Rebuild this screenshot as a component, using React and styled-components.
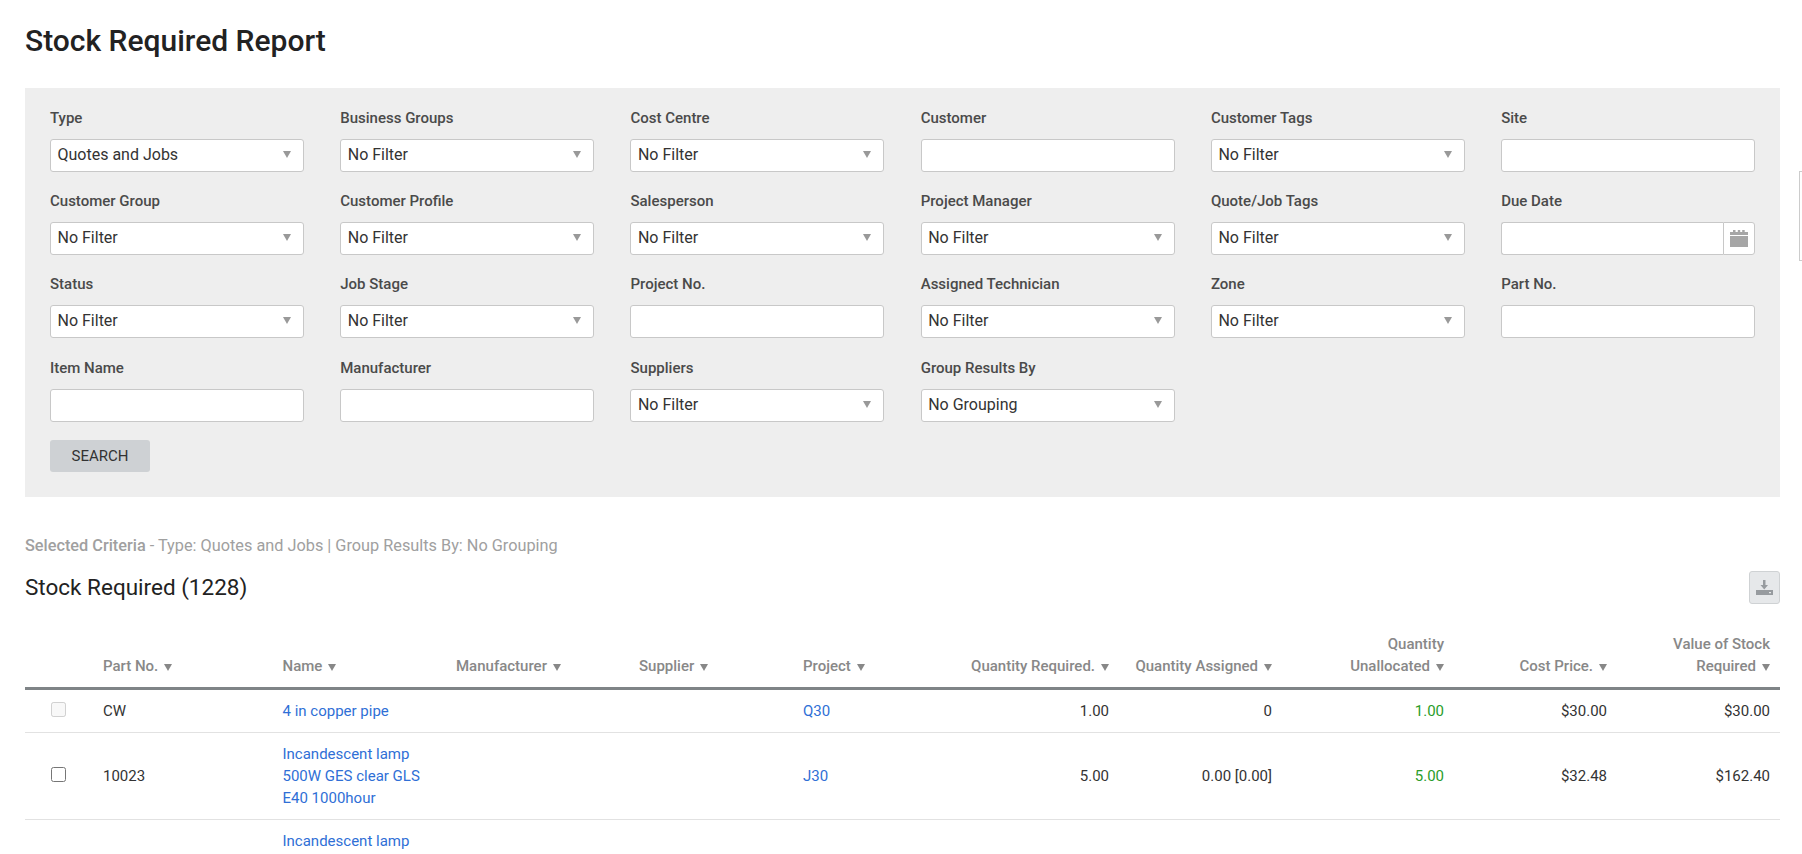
import React from 'react'
import styled, { createGlobalStyle } from 'styled-components'

const filters = [
  { label: 'Type', value: 'Quotes and Jobs' },
  { label: 'Business Groups', value: 'No Filter' },
  { label: 'Cost Centre', value: 'No Filter' },
  { label: 'Customer' },
  { label: 'Customer Tags', value: 'No Filter' },
  { label: 'Site' },
  { label: 'Customer Group', value: 'No Filter' },
  { label: 'Customer Profile', value: 'No Filter' },
  { label: 'Salesperson', value: 'No Filter' },
  { label: 'Project Manager', value: 'No Filter' },
  { label: 'Quote/Job Tags', value: 'No Filter' },
  { label: 'Due Date', date: true },
  { label: 'Status', value: 'No Filter' },
  { label: 'Job Stage', value: 'No Filter' },
  { label: 'Project No.' },
  { label: 'Assigned Technician', value: 'No Filter' },
  { label: 'Zone', value: 'No Filter' },
  { label: 'Part No.' },
  { label: 'Item Name' },
  { label: 'Manufacturer' },
  { label: 'Suppliers', value: 'No Filter' },
  { label: 'Group Results By', value: 'No Grouping' },
]

const columns = [
  { width: 68 },
  { label: 'Part No.', width: 179.5 },
  { label: 'Name', width: 173.5 },
  { label: 'Manufacturer', width: 183 },
  { label: 'Supplier', width: 164 },
  { label: 'Project', width: 162 },
  { label: 'Quantity Required.', width: 164, right: true },
  { label: 'Quantity Assigned', width: 163, right: true },
  { label: ['Quantity', 'Unallocated'], width: 172, right: true },
  { label: 'Cost Price.', width: 163, right: true },
  { label: ['Value of Stock', 'Required'], width: 163, right: true },
]

const rows = [
  { disabled: true, part: 'CW', name: ['4 in copper pipe'], project: 'Q30', required: '1.00', assigned: '0', unallocated: '1.00', cost: '$30.00', value: '$30.00' },
  { part: '10023', name: ['Incandescent lamp', '500W GES clear GLS', 'E40 1000hour'], project: 'J30', required: '5.00', assigned: '0.00 [0.00]', unallocated: '5.00', cost: '$32.48', value: '$162.40' },
  { name: ['Incandescent lamp'], hideCheck: true },
]

const App = () => {
  return (
    <>
      <GlobalStyle />
      <Page>
        <Title>Stock Required Report</Title>
        <FilterPanel>
          <FilterGrid>
            {filters.map((f) => (
              <Field key={f.label}>
                <FieldLabel>{f.label}</FieldLabel>
                {f.value && <SelectBox>{f.value}</SelectBox>}
                {f.date && (
                  <DateBox>
                    <DateInput />
                    <DateButton>
                      <svg width="18" height="17" viewBox="0 0 18 17">
                        <path fill="#a6a6a6" d="M3 0h2.500v2H7.800V0h2.400v2h2V0h2.500v2H18v3H0V2h3z" />
                        <path fill="#a6a6a6" d="M0 6h18v11H0z" />
                      </svg>
                    </DateButton>
                  </DateBox>
                )}
                {!f.value && !f.date && <TextInput />}
              </Field>
            ))}
          </FilterGrid>
          <SearchButton>SEARCH</SearchButton>
        </FilterPanel>

        <Criteria>
          <b>Selected Criteria</b> - Type: Quotes and Jobs | Group Results By: No Grouping
        </Criteria>

        <ResultsHeader>
          <ResultsTitle>Stock Required (1228)</ResultsTitle>
          <DownloadButton>
            <svg width="17" height="15" viewBox="0 0 17 15">
              <path fill="#979b9f" d="M7 0h2.500v5H12L8.250 9.500 4.500 5H7z" />
              <path fill="#979b9f" fillRule="evenodd" d="M0 10h17v5H0zM13 12v1.200h2V12z" />
            </svg>
          </DownloadButton>
        </ResultsHeader>

        <Table>
          <colgroup>
            {columns.map((c, i) => (
              <col key={i} style={{ width: c.width }} />
            ))}
          </colgroup>
          <thead>
            <tr>
              {columns.map((c, i) => {
                const lines = Array.isArray(c.label) ? c.label : [c.label]
                return (
                  <HeadCell key={i} $right={c.right}>
                    {c.label && lines.map((line, n) => (
                      <HeadLine key={line}>
                        {line}
                        {n === lines.length - 1 && <SortCaret />}
                      </HeadLine>
                    ))}
                  </HeadCell>
                )
              })}
            </tr>
          </thead>
          <tbody>
            {rows.map((r, i) => (
              <tr key={i}>
                <Cell>{!r.hideCheck && <Check type="checkbox" disabled={r.disabled} readOnly />}</Cell>
                <Cell>{r.part}</Cell>
                <Cell>
                  <NameLink href="#">
                    {r.name.map((line) => (
                      <span key={line}>{line}</span>
                    ))}
                  </NameLink>
                </Cell>
                <Cell />
                <Cell />
                <Cell><TableLink href="#">{r.project}</TableLink></Cell>
                <Cell $right>{r.required}</Cell>
                <Cell $right>{r.assigned}</Cell>
                <Cell $right $green>{r.unallocated}</Cell>
                <Cell $right>{r.cost}</Cell>
                <Cell $right>{r.value}</Cell>
              </tr>
            ))}
          </tbody>
        </Table>
        <SideTab />
      </Page>
    </>
  )
}

export default App

const GlobalStyle = createGlobalStyle`
html, body {
  margin:0;
  height:854px;
  overflow:hidden;
  background:#fff;
}
body {
  font-family:Roboto, "Liberation Sans", sans-serif;
  font-size:15px;
  color:#333;
}
* {
  box-sizing:border-box;
}
`

const Page = styled.div`
height:854px;
overflow:hidden;
padding:0 22px 0 25px;
`

const Title = styled.h1`
margin:0;
padding-top:23px;
height:88px;
font-size:30px;
line-height:36px;
font-weight:500;
color:#222;
`

const FilterPanel = styled.div`
background:#eee;
height:409px;
padding:20px 25px 0;
`

const FilterGrid = styled.div`
display:grid;
grid-template-columns:repeat(6, 1fr);
grid-template-rows:83px 83px 84px 83px;
column-gap:36.4px;
`

const Field = styled.div`
display:flex;
flex-direction:column;
`

const FieldLabel = styled.label`
font-size:15px;
line-height:20px;
height:31px;
font-weight:500;
color:#4a4a4a;
`

const SelectBox = styled.div`
position:relative;
height:33px;
line-height:30px;
padding:0 6.500px;
background:#fff;
border:1px solid #c8c8c8;
border-radius:3px;
font-size:16px;
color:#333;
&::after{
    content:'';
    position:absolute;
    right:12px;
    top:11px;
    border-left:4px solid transparent;
    border-right:4px solid transparent;
    border-top:7px solid #999;
}
`

const TextInput = styled.input`
height:33px;
width:100%;
background:#fff;
border:1px solid #c8c8c8;
border-radius:3px;
`

const DateBox = styled.div`
display:flex;
height:33px;
`

const DateInput = styled.input`
flex:1;
min-width:0;
background:#fff;
border:1px solid #c8c8c8;
border-right:none;
border-radius:3px 0 0 3px;
`

const DateButton = styled.span`
width:32px;
display:flex;
align-items:center;
justify-content:center;
background:#fff;
border:1px solid #c8c8c8;
border-radius:0 3px 3px 0;
`

const SearchButton = styled.button`
display:block;
margin-top:-1px;
width:100px;
height:32px;
background:#ced1d4;
border:none;
border-radius:3px;
font-family:inherit;
font-size:15px;
color:#333;
`

const Criteria = styled.div`
margin-top:38px;
line-height:22px;
font-size:16.300px;
color:#a0a0a0;
b{
    font-weight:500;
}
`

const ResultsHeader = styled.div`
display:flex;
align-items:center;
justify-content:space-between;
margin-top:14px;
height:32px;
`

const ResultsTitle = styled.h2`
margin:0;
font-size:22.500px;
line-height:32px;
font-weight:400;
color:#222;
`

const DownloadButton = styled.span`
width:31px;
height:33px;
display:flex;
align-items:center;
justify-content:center;
background:#e6e8ea;
border:1px solid #cfd2d4;
border-radius:3px;
`

const Table = styled.table`
width:1755px;
table-layout:fixed;
border-collapse:collapse;
margin-top:30px;
`

const HeadCell = styled.th`
padding:0 10px 10px;
vertical-align:bottom;
border-bottom:3px solid #7f8487;
text-align:${props => props.$right ? 'right' : 'left'};
font-size:15px;
line-height:22px;
font-weight:500;
color:#888;
`

const HeadLine = styled.div`
white-space:nowrap;
`

const SortCaret = styled.span`
display:inline-block;
margin-left:6px;
border-left:4px solid transparent;
border-right:4px solid transparent;
border-top:7px solid #888;
`

const Cell = styled.td`
padding:10px;
border-bottom:1px solid #e2e2e2;
tr:last-child > &{
    border-bottom:none;
}
text-align:${props => props.$right ? 'right' : 'left'};
font-size:15px;
line-height:22px;
color:${props => props.$green ? '#2a9d2a' : '#333'};
`

const Check = styled.input`
display:block;
width:15px;
height:15px;
margin:-3px 0 0 16px;
`

const TableLink = styled.a`
color:#2f6fd6;
text-decoration:none;
`

const NameLink = styled(TableLink)`
display:block;
span{
    display:block;
}
`

const SideTab = styled.div`
position:fixed;
left:1799px;
top:171px;
width:10px;
height:90px;
background:#fff;
border:1px solid #ccc;
`
